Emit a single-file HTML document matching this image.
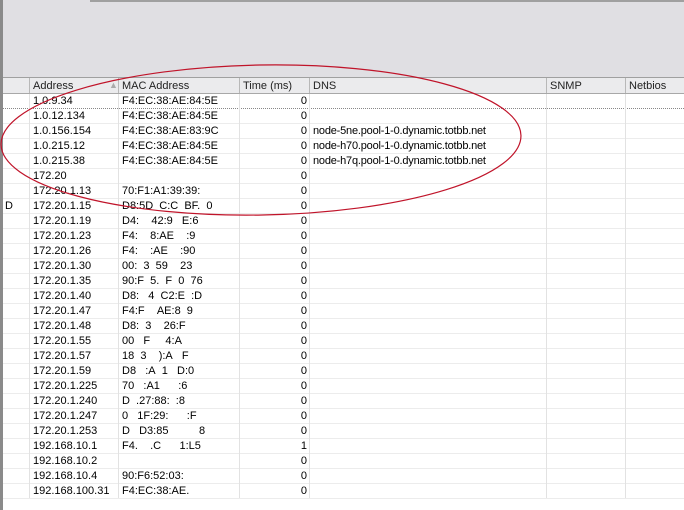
<!DOCTYPE html>
<html><head><style>
body{margin:0;width:684px;height:510px;overflow:hidden;background:#fff;font-family:"Liberation Sans",sans-serif;font-size:11px;color:#000;position:relative}
.top{position:absolute;left:0;top:0;width:684px;height:77px;background:#e0dfe3}
.tl{position:absolute;left:90px;top:0;width:594px;height:2px;background:#a0a0a0}
.lb{position:absolute;left:0;top:0;width:3px;height:510px;background:#8a8a8a}
.hdr{position:absolute;left:3px;top:77px;width:681px;height:15px;background:#ebebed;border-top:1px solid #a0a0a0;border-bottom:1px solid #a8a8a8}
.h{position:absolute;top:80px;color:#222}
.vl{position:absolute;top:78px;width:1px;height:420px;background:#e2e2e2}
.hv{position:absolute;top:78px;width:1px;height:15px;background:#b8b8b8}
.row{position:absolute;left:3px;width:681px;height:15px;border-bottom:1px solid #ececec}
.c{position:absolute;top:2px;white-space:nowrap}
.t{position:absolute;top:2px;right:377px}
</style></head><body>
<div class="top"></div><div class="tl"></div>
<div class="hdr"></div>
<div class="hv" style="left:29px"></div><div class="hv" style="left:118px"></div><div class="hv" style="left:239px"></div><div class="hv" style="left:309px"></div><div class="hv" style="left:546px"></div><div class="hv" style="left:625px"></div>
<div class="h" style="left:33px">Address</div><div class="h" style="left:109px;color:#aaa;font-size:9px">▲</div>
<div class="h" style="left:122px">MAC Address</div><div class="h" style="left:243px">Time (ms)</div><div class="h" style="left:313px">DNS</div><div class="h" style="left:550px">SNMP</div><div class="h" style="left:629px">Netbios</div>
<div id="rows"></div>
<div class="vl" style="left:29px;top:94px;height:404px"></div><div class="vl" style="left:118px;top:94px;height:404px"></div><div class="vl" style="left:239px;top:94px;height:404px"></div><div class="vl" style="left:309px;top:94px;height:404px"></div><div class="vl" style="left:546px;top:94px;height:404px"></div><div class="vl" style="left:625px;top:94px;height:404px"></div>
<div class="lb"></div>
<script>
var d=[["","1.0.9.34","F4:EC:38:AE:84:5E","0",""],["","1.0.12.134","F4:EC:38:AE:84:5E","0",""],["","1.0.156.154","F4:EC:38:AE:83:9C","0","node-5ne.pool-1-0.dynamic.totbb.net"],["","1.0.215.12","F4:EC:38:AE:84:5E","0","node-h70.pool-1-0.dynamic.totbb.net"],["","1.0.215.38","F4:EC:38:AE:84:5E","0","node-h7q.pool-1-0.dynamic.totbb.net"],["","172.20","","0",""],["","172.20.1.13","70:F1:A1:39:39:","0",""],["D","172.20.1.15","D8:5D  C:C  BF.  0","0",""],["","172.20.1.19","D4:    42:9   E:6","0",""],["","172.20.1.23","F4:    8:AE    :9","0",""],["","172.20.1.26","F4:    :AE    :90","0",""],["","172.20.1.30","00:  3  59    23","0",""],["","172.20.1.35","90:F  5.  F  0  76","0",""],["","172.20.1.40","D8:   4  C2:E  :D","0",""],["","172.20.1.47","F4:F    AE:8  9","0",""],["","172.20.1.48","D8:  3    26:F   ","0",""],["","172.20.1.55","00   F     4:A   ","0",""],["","172.20.1.57","18  3    ):A   F","0",""],["","172.20.1.59","D8   :A  1   D:0","0",""],["","172.20.1.225","70   :A1      :6","0",""],["","172.20.1.240","D  .27:88:  :8","0",""],["","172.20.1.247","0   1F:29:      :F","0",""],["","172.20.1.253","D   D3:85          8","0",""],["","192.168.10.1","F4.    .C      1:L5","1",""],["","192.168.10.2","","0",""],["","192.168.10.4","90:F6:52:03:","0",""],["","192.168.100.31","F4:EC:38:AE.","0",""]];
var h="";d.forEach(function(r,i){var y=93+i*15;var st=i==0?"border-bottom:1px dotted #888;":"";
h+='<div class="row" style="top:'+y+'px;'+st+'"><span class="c" style="left:2px">'+r[0]+'</span><span class="c" style="left:30px">'+r[1]+'</span><span class="c" style="left:119px">'+r[2].replace(/ /g,"&nbsp;")+'</span><span class="t">'+r[3]+'</span><span class="c" style="left:310px;letter-spacing:-0.2px">'+r[4]+'</span></div>';});
document.getElementById("rows").innerHTML=h;
</script>
<svg style="position:absolute;left:0;top:0" width="684" height="510"><ellipse cx="261" cy="140" rx="260" ry="75" fill="none" stroke="#c0142a" stroke-width="1.2" transform="rotate(-1 261 140)"/></svg>
</body></html>
